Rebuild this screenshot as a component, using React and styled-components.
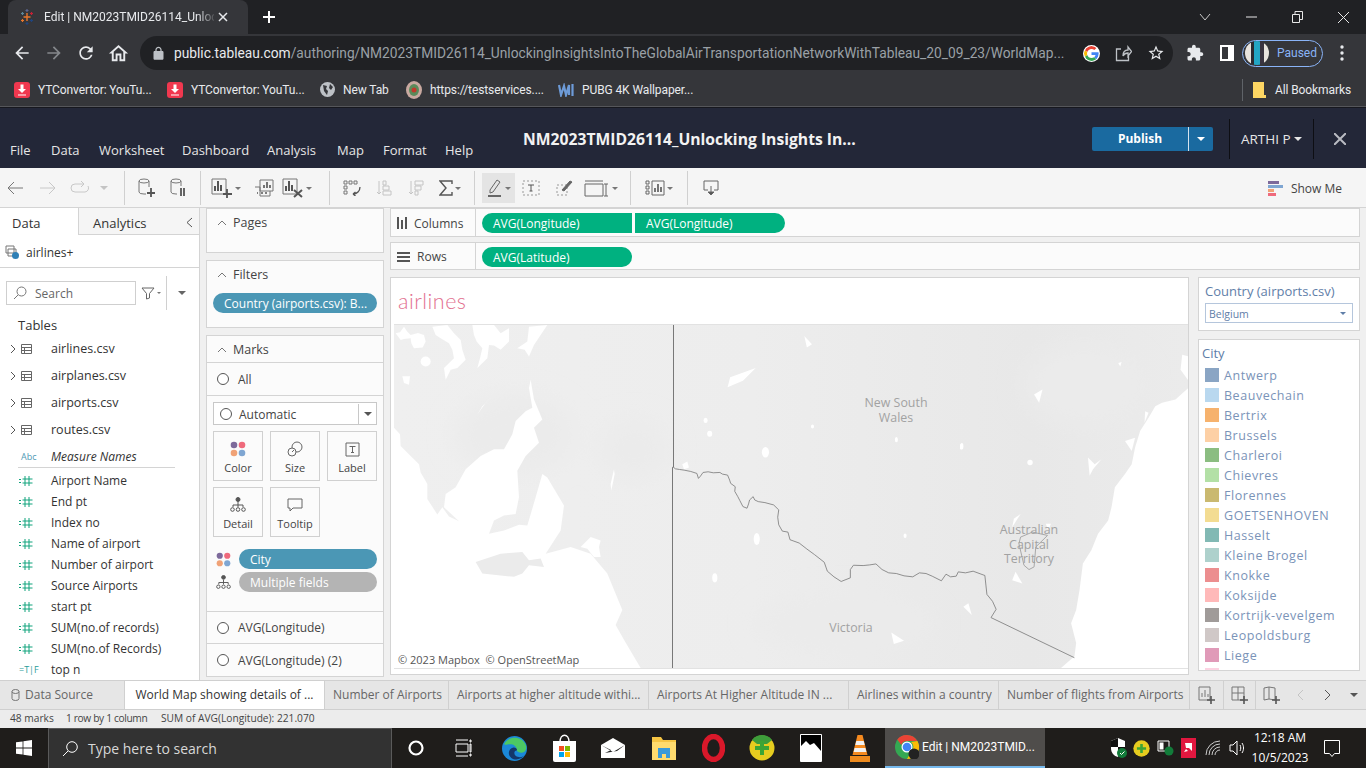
import React from 'react'
import styled, { createGlobalStyle } from 'styled-components'

const GlobalStyle = createGlobalStyle`
    html, body { margin: 0; padding: 0; background: #f0f0f0; }
    * { box-sizing: border-box; }
    svg { display: block; flex-shrink: 0; }
`;

const UI = `"Open Sans", "Noto Sans", sans-serif`;
const CHROME = `Roboto, "Open Sans", sans-serif`;

const Page = styled.div`
    width: 1366px;
    height: 768px;
    overflow: hidden;
    display: flex;
    flex-direction: column;
    font-family: ${UI};
    background: #f0f0f0;
`;

/* ---------- chrome browser ---------- */
const TabStrip = styled.div`
    height: 34px;
    background: #202124;
    display: flex;
    align-items: flex-end;
    padding-left: 8px;
    font-family: ${CHROME};
`;
const BrowserTab = styled.div`
    width: 240px;
    height: 34px;
    background: #35363a;
    border-radius: 8px 8px 0 0;
    display: flex;
    align-items: center;
    padding-left: 11px;
    color: #e8eaed;
    font-size: 12px;
`;
const TabTitle = styled.span`
    width: 170px;
    margin-left: 9px;
    white-space: nowrap;
    -webkit-mask-image: linear-gradient(to right, #000 90%, rgba(0, 0, 0, 0.15));
`;
const TabClose = styled.span`
    margin-left: 4px;
`;
const NewTab = styled.span`
    margin-left: 14px;
    height: 34px;
    display: flex;
    align-items: center;
`;
const WinControls = styled.div`
    margin-left: auto;
    height: 34px;
    display: flex;
    align-items: center;
`;
const WinBtn = styled.span`
    width: 46px;
    height: 28px;
    display: flex;
    align-items: center;
    justify-content: center;
`;

const AddressRow = styled.div`
    height: 39px;
    background: #35363a;
    display: flex;
    align-items: center;
    font-family: ${CHROME};
`;
const NavBtn = styled.span`
    width: ${p => p.$w || 32}px;
    display: flex;
    justify-content: center;
    align-items: center;
`;
const NavGroup = styled.div`
    display: flex;
    width: 140px;
    padding-left: 6px;
`;
const UrlBox = styled.div`
    width: 1033px;
    height: 34px;
    border-radius: 17px;
    background: #202124;
    display: flex;
    align-items: center;
    padding-left: 11px;
    font-size: 13.75px;
    color: #9aa0a6;
    white-space: nowrap;
`;
const UrlText = styled.span`
    width: 896px;
    margin-left: 8px;
    b { font-weight: 400; color: #e8eaed; }
`;
const UrlIcons = styled.div`
    display: flex;
    align-items: center;
    margin-left: 13px;
    gap: 15px;
`;
const ProfilePill = styled.div`
    margin-left: 5px;
    width: 81px;
    height: 27px;
    border: 1px solid #8ab4f8;
    border-radius: 14px;
    display: flex;
    align-items: center;
    padding-left: 2px;
    color: #8ab4f8;
    font-size: 12px;
    gap: 8px;
`;
const Avatar = styled.span`
    width: 24px;
    height: 24px;
    border-radius: 50%;
    background: linear-gradient(90deg, #e8e4de 0 25%, #2c2a30 25% 38%, #23a6c4 38% 62%, #3a3440 62% 78%, #e8e4de 78%);
`;

const BookmarkRow = styled.div`
    height: 35px;
    background: #35363a;
    display: flex;
    align-items: center;
    font-family: ${CHROME};
    font-size: 12px;
    letter-spacing: -0.1px;
    color: #e8eaed;
    border-bottom: 1px solid #55565a;
`;
const Bookmark = styled.div`
    width: ${p => p.$w}px;
    display: flex;
    align-items: center;
    gap: 8px;
    white-space: nowrap;
`;
const BookmarksLeft = styled.div`
    display: flex;
    padding-left: 14px;
    width: 1242px;
`;
const BookmarksRight = styled.div`
    border-left: 1px solid #5f6368;
    height: 22px;
    padding-left: 10px;
    display: flex;
    align-items: center;
    gap: 9px;
`;

/* ---------- tableau header ---------- */
const AppHeader = styled.header`
    height: 61px;
    background: #232738;
    border-top: 1px solid #17181f;
    padding-top: 1px;
    display: flex;
    align-items: center;
    color: #e6e6e6;
`;
const Menu = styled.nav`
    align-self: flex-end;
    display: flex;
    padding: 0 0 8px 10px;
    font-size: 13px;
    line-height: 20px;
    width: 523px;
`;
const MenuItem = styled.span`
    width: ${p => p.$w}px;
`;
const WorkbookTitle = styled.h1`
    margin: 0;
    width: 569px;
    font-size: 15.7px;
    font-weight: 700;
    color: #f2f2f2;
    white-space: nowrap;
`;
const PublishBtn = styled.div`
    width: 121px;
    height: 24px;
    background: #1a6aa0;
    border-radius: 2px;
    display: flex;
    align-items: center;
    color: #fff;
    font-size: 12px;
    font-weight: 700;
`;
const PublishLabel = styled.span`
    width: 96px;
    text-align: center;
`;
const PublishCaret = styled.span`
    flex: 1;
    height: 100%;
    border-left: 1px solid #d5e3ee;
    display: flex;
    align-items: center;
    justify-content: center;
`;
const UserBox = styled.div`
    margin-left: 16px;
    width: 85px;
    height: 40px;
    border-left: 1px solid #0d0e13;
    border-right: 1px solid #0d0e13;
    display: flex;
    align-items: center;
    padding-left: 11px;
    gap: 3px;
    font-size: 13.5px;
    white-space: nowrap;
`;
const CloseBtn = styled.span`
    margin-left: 20px;
`;
const Caret = styled.i`
    display: inline-block;
    width: 0;
    height: 0;
    border-left: ${p => p.$s || 4}px solid transparent;
    border-right: ${p => p.$s || 4}px solid transparent;
    border-top: ${p => p.$s || 4}px solid ${p => p.$c || '#777'};
`;

/* ---------- tableau toolbar ---------- */
const Toolbar = styled.div`
    height: 40px;
    background: #f5f5f5;
    border-bottom: 1px solid #d4d4d4;
    padding-top: 1px;
    display: flex;
    align-items: center;
    flex-shrink: 0;
`;
const Tool = styled.span`
    width: ${p => p.$w}px;
    height: ${p => (p.$on ? 30 : 24)}px;
    display: flex;
    align-items: center;
    justify-content: center;
    gap: 2px;
    background: ${p => (p.$on ? '#e4e4e4' : 'transparent')};
`;
const ToolSep = styled.span`
    width: 1px;
    height: 34px;
    background: #d0d0d0;
    margin-left: ${p => p.$ml}px;
`;
const ShowMe = styled.div`
    margin-left: auto;
    padding: 1px 24px 0 0;
    display: flex;
    align-items: center;
    gap: 8px;
    font-size: 12px;
    color: #444;
`;

/* ---------- work area ---------- */
const Work = styled.main`
    height: 472px;
    display: flex;
    background: #f0f0f0;
    flex-shrink: 0;
`;
const DataPane = styled.aside`
    width: 200px;
    background: #fff;
    border-right: 1px solid #d4d4d4;
    display: flex;
    flex-direction: column;
    overflow: hidden;
    color: #333;
`;
const PaneTabs = styled.div`
    height: 27px;
    display: flex;
    font-size: 13px;
`;
const PaneTab = styled.div`
    width: ${p => p.$w}px;
    display: flex;
    align-items: center;
    padding: 3px 6px 0 ${p => p.$pl}px;
    background: ${p => (p.$on ? '#fff' : '#f5f5f5')};
    border-bottom: ${p => (p.$on ? 'none' : '1px solid #d4d4d4')};
    border-right: ${p => (p.$on ? '1px solid #d4d4d4' : 'none')};
    justify-content: space-between;
`;
const SourceRow = styled.div`
    height: 33px;
    border-bottom: 1px solid #d4d4d4;
    display: flex;
    align-items: center;
    padding: 2px 0 0 5px;
    gap: 6px;
    font-size: 12px;
`;
const SearchRow = styled.div`
    height: 35px;
    margin-top: 13px;
    padding-left: 6px;
    display: flex;
    align-items: flex-start;
`;
const SearchBox = styled.div`
    width: 130px;
    height: 24px;
    border: 1px solid #cfcfcf;
    display: flex;
    align-items: center;
    padding-left: 6px;
    gap: 8px;
    font-size: 12px;
    color: #666;
`;
const SearchTools = styled.div`
    height: 24px;
    display: flex;
    align-items: center;
`;
const SectionLabel = styled.div`
    padding-left: 18px;
    font-size: 13px;
    height: 19px;
    line-height: 18px;
`;
const TableRow = styled.div`
    height: 27px;
    display: flex;
    align-items: center;
    padding-left: 10px;
    font-size: 12.5px;
`;
const TableName = styled.span`
    margin-left: 15px;
`;
const NamesRow = styled.div`
    margin: 2px 24px 2px 18px;
    height: 23px;
    border-bottom: 1px solid #d4d4d4;
    display: flex;
    align-items: center;
    font-size: 12px;
    font-style: italic;
`;
const AbcMark = styled.span`
    width: 33px;
    padding-left: 3px;
    font-size: 9px;
    font-style: normal;
    color: #4f9ab5;
`;
const FieldRow = styled.div`
    height: 21px;
    display: flex;
    align-items: center;
    padding-left: 19px;
    font-size: 12px;
    white-space: nowrap;
`;
const FieldName = styled.span`
    margin-left: 18px;
`;
const BoolMark = styled.span`
    width: 32px;
    font-size: 9px;
    color: #2a9d9a;
`;

const CardsPane = styled.div`
    width: 178px;
    margin-left: 6px;
    display: flex;
    flex-direction: column;
    gap: 7px;
`;
const Card = styled.section`
    height: ${p => p.$h}px;
    background: #fbfbfb;
    border: 1px solid #d4d4d4;
    color: #444;
    font-size: 12px;
`;
const CardHead = styled.div`
    height: 26px;
    display: flex;
    align-items: center;
    padding: 1px 0 0 10px;
    gap: 6px;
    font-size: 12.5px;
`;
const FilterPill = styled.div`
    margin: 6px 6px 0 6px;
    height: 20px;
    border-radius: 10px;
    background: #4b97b5;
    color: #fff;
    padding-left: 11px;
    line-height: 22px;
    font-size: 12px;
    white-space: nowrap;
`;
const MarksRow = styled.div`
    height: ${p => p.$h}px;
    border-top: 1px solid #d4d4d4;
    display: flex;
    align-items: center;
    padding-left: 10px;
    gap: 9px;
    font-size: 12px;
`;
const MarksBody = styled.div`
    border-top: 1px solid #d4d4d4;
`;
const Radio = styled.i`
    width: 12px;
    height: 12px;
    border: 1px solid #555;
    border-radius: 50%;
    flex-shrink: 0;
    background: #fff;
`;
const MarkSelect = styled.div`
    margin: 6px 0 6px 6px;
    width: 164px;
    height: 23px;
    border: 1px solid #c8c8c8;
    background: #fff;
    display: flex;
    align-items: center;
    padding: 1px 0 0 6px;
    gap: 7px;
    font-size: 12px;
`;
const SelectArrow = styled.span`
    margin-left: auto;
    width: 18px;
    height: 100%;
    border-left: 1px solid #c8c8c8;
    display: flex;
    align-items: center;
    justify-content: center;
`;
const MarkGrid = styled.div`
    margin-left: 6px;
    display: grid;
    grid-template-columns: repeat(3, 50px);
    grid-auto-rows: 50px;
    gap: 6px 7px;
`;
const MarkBtn = styled.div`
    border: 1px solid #d0d0d0;
    background: #fbfbfb;
    display: flex;
    flex-direction: column;
    align-items: center;
    justify-content: center;
    gap: 3px;
    font-size: 11px;
    color: #444;
    padding-top: 4px;
`;
const PillList = styled.div`
    margin: 12px 6px 19px 9px;
    display: grid;
    grid-template-columns: 16px 138px;
    grid-auto-rows: 20px;
    column-gap: 7px;
    row-gap: 3px;
    align-items: center;
`;
const Pill = styled.div`
    height: 20px;
    border-radius: 10px;
    background: ${p => p.$bg};
    color: #fff;
    padding-left: 11px;
    line-height: 22px;
    font-size: 12px;
`;

const VizArea = styled.div`
    width: 970px;
    margin-left: 6px;
    display: flex;
    flex-direction: column;
`;
const Shelf = styled.div`
    height: ${p => p.$h}px;
    margin-bottom: ${p => p.$mb}px;
    background: #fbfbfb;
    border: 1px solid #d4d4d4;
    display: flex;
    align-items: center;
    font-size: 12px;
    color: #444;
`;
const ShelfLabel = styled.div`
    width: 85px;
    height: 100%;
    border-right: 1px solid #d4d4d4;
    display: flex;
    align-items: center;
    padding: 1px 0 0 6px;
    gap: 7px;
    margin-right: 6px;
`;
const GreenPill = styled.div`
    width: 150px;
    height: 20px;
    margin: 1px 3px 0 0;
    background: #00b180;
    border-radius: ${p => p.$r};
    color: #fff;
    padding-left: 11px;
    line-height: 21px;
    font-size: 12px;
`;
const VizRow = styled.div`
    display: flex;
    gap: 9px;
`;
const Sheet = styled.section`
    width: 799px;
    height: 398px;
    background: #fff;
    border: 1px solid #d4d4d4;
    padding-left: 3px;
`;
const SheetTitle = styled.h2`
    margin: 0;
    height: 46px;
    padding: 11px 0 0 4px;
    font-size: 21.5px;
    line-height: 25px;
    font-weight: 300;
    font-family: "Lato", ${UI};
    color: #e2708f;
    letter-spacing: 0.5px;
`;
const MapBox = styled.div`
    position: relative;
    width: 794px;
    height: 345px;
    border-top: 1px solid #e2e2e2;
    border-bottom: 1px solid #e2e2e2;
    overflow: hidden;
    svg { width: 100%; height: 100%; }
`;
const MapLabel = styled.div`
    position: absolute;
    left: ${p => p.$x}px;
    top: ${p => p.$y}px;
    transform: translateX(-50%);
    text-align: center;
    font-size: 12.4px;
    line-height: 14.6px;
    color: #a2a2a2;
    white-space: nowrap;
`;
const Attribution = styled.div`
    position: absolute;
    left: 0;
    bottom: 0;
    padding: 0 4px;
    font-size: 11px;
    line-height: 16px;
    color: #555;
    background: rgba(255, 255, 255, 0.5);
`;

const Legends = styled.div`
    width: 162px;
    display: flex;
    flex-direction: column;
    gap: 8px;
`;
const LegendCard = styled.section`
    height: ${p => p.$h}px;
    background: #fff;
    border: 1px solid #d4d4d4;
    overflow: hidden;
    color: #5f7ea8;
`;
const LegendTitle = styled.div`
    font-size: 13px;
    line-height: 18px;
    margin: ${p => p.$m};
`;
const CountrySelect = styled.div`
    margin: 3px 6px 0 6px;
    height: 20px;
    border: 1px solid #b5c6dc;
    display: flex;
    align-items: center;
    justify-content: space-between;
    padding: 1px 6px 0 3px;
    font-size: 10.5px;
`;
const LegendItem = styled.div`
    height: 20px;
    display: flex;
    align-items: center;
    padding-left: 6px;
    gap: 5px;
    font-size: 12.5px;
    white-space: nowrap;
    letter-spacing: 0.55px;
    color: #7a93b8;
`;
const Swatch = styled.i`
    width: 14px;
    height: 14px;
    background: ${p => p.$c};
`;

/* ---------- bottom ---------- */
const SheetTabs = styled.div`
    height: 30px;
    background: #e6e6e6;
    border-top: 1px solid #d0d0d0;
    border-bottom: 1px solid #cfcfcf;
    display: flex;
    font-size: 12px;
    color: #666;
    flex-shrink: 0;
`;
const SheetTab = styled.div`
    width: ${p => p.$w}px;
    display: flex;
    align-items: center;
    justify-content: ${p => (p.$on ? 'center' : 'flex-start')};
    padding: 0 0 1px ${p => (p.$on ? 0 : p.$pl || 8)}px;
    gap: 5px;
    white-space: nowrap;
    overflow: hidden;
    background: ${p => (p.$on ? '#fff' : 'transparent')};
    color: ${p => (p.$on ? '#333' : '#666')};
    border-right: 1px solid #d0d0d0;
`;
const SheetIcon = styled.span`
    width: ${p => p.$w}px;
    display: flex;
    align-items: center;
    justify-content: center;
    border-right: ${p => (p.$line ? '1px solid #d0d0d0' : 'none')};
`;
const StatusBar = styled.div`
    height: 18px;
    background: #ececec;
    display: flex;
    align-items: center;
    padding: 0 0 2px 10px;
    font-size: 10.2px;
    color: #444;
    flex-shrink: 0;
    white-space: nowrap;
`;
const StatusItem = styled.span`
    width: ${p => p.$w}px;
    letter-spacing: ${p => p.$ls || 0}px;
`;

const Taskbar = styled.footer`
    height: 40px;
    background: #1f1d1b;
    display: flex;
    align-items: center;
    color: #fff;
    flex-shrink: 0;
`;
const StartBtn = styled.span`
    width: 48px;
    display: flex;
    justify-content: center;
`;
const TaskSearch = styled.div`
    width: 344px;
    height: 40px;
    background: #323232;
    border: 1px solid #5a5a5a;
    border-bottom: none;
    display: flex;
    align-items: center;
    padding-left: 13px;
    gap: 10px;
    font-size: 14px;
    color: #d8d8d8;
`;
const TaskIcon = styled.span`
    width: ${p => p.$w || 49}px;
    display: flex;
    justify-content: center;
    align-items: center;
`;
const ChromeTask = styled.div`
    width: 160px;
    height: 40px;
    background: #4f4d4b;
    border-bottom: 2px solid #76b9ed;
    display: flex;
    align-items: center;
    padding-left: 10px;
    gap: 3px;
    font-family: ${CHROME};
    font-size: 12px;
    white-space: nowrap;
`;
const Tray = styled.div`
    margin-left: auto;
    padding-right: 11px;
    display: flex;
    align-items: center;
`;
const Clock = styled.div`
    width: 58px;
    margin-left: 3px;
    text-align: center;
    font-size: 12px;
    line-height: 20px;
`;

/* ---------- icons ---------- */
const Mat = ({ d, c = '#e8eaed', s = 20 }) => (
    <svg width={s} height={s} viewBox="0 0 24 24" fill={c}><path d={d} /></svg>
);
const Line = ({ w = 22, h = 22, c = '#777', sw = 1, children }) => (
    <svg width={w} height={h} viewBox={`0 0 ${w} ${h}`} fill="none" stroke={c} strokeWidth={sw}>{children}</svg>
);

const TableauLogo = () => (
    <svg width="16" height="16" viewBox="0 0 16 16" strokeWidth="1.2" fill="none">
        <path d="M8 4v8M4.5 8h7" stroke="#e8762c" strokeWidth="1.4" />
        <path d="M3.5 3v3M2 4.5h3" stroke="#5b879b" />
        <path d="M12.5 3v3M11 4.5h3" stroke="#c72035" />
        <path d="M3.5 10v3M2 11.5h3" stroke="#e8762c" />
        <path d="M12.5 10v3M11 11.5h3" stroke="#1f447e" />
        <path d="M8 0v3M6.5 1.5h3" stroke="#5b6591" />
        <path d="M8 13v3M6.5 14.5h3" stroke="#1f447e" />
    </svg>
);
const GoogleG = () => (
    <svg width="17" height="17" viewBox="0 0 48 48" style={{ background: '#fff', borderRadius: '50%', padding: 1 }}>
        <path fill="#EA4335" d="M24 9.5c3.5 0 6.6 1.2 9.1 3.6l6.8-6.8C35.9 2.4 30.4 0 24 0 14.6 0 6.6 5.4 2.6 13.2l7.9 6.2C12.4 13.7 17.7 9.5 24 9.5z" />
        <path fill="#4285F4" d="M46.9 24.5c0-1.6-.1-3.1-.4-4.5H24v9h12.9c-.6 3-2.2 5.5-4.7 7.2l7.7 6c4.4-4.1 7-10.2 7-17.7z" />
        <path fill="#FBBC05" d="M10.5 28.6c-.5-1.4-.8-3-.8-4.6s.3-3.2.8-4.6l-7.9-6.2C.9 16.5 0 20.1 0 24s.9 7.5 2.6 10.8l7.9-6.2z" />
        <path fill="#34A853" d="M24 48c6.5 0 11.9-2.1 15.9-5.8l-7.7-6c-2.2 1.5-4.9 2.3-8.2 2.3-6.3 0-11.6-4.2-13.5-9.9l-7.9 6.2C6.6 42.6 14.6 48 24 48z" />
    </svg>
);
const RedBook = () => (
    <svg width="16" height="16" viewBox="0 0 16 16">
        <rect width="16" height="16" rx="3" fill="#f0384f" />
        <path d="M6.5 2.5h3V7H12l-4 4-4-4h2.5zM4 12.5h8v1H4z" fill="#fff" />
    </svg>
);
const GlobeGray = () => (
    <svg width="15" height="15" viewBox="0 0 15 15">
        <circle cx="7.5" cy="7.5" r="7.5" fill="#bdc1c6" />
        <path d="M3 3l4 1-1 3 2 2-1 4-3-4zM10 2l3 3-2 3-2-2z" fill="#35363a" />
    </svg>
);
const Seal = () => (
    <svg width="16" height="18" viewBox="0 0 16 18">
        <ellipse cx="8" cy="9" rx="8" ry="9" fill="#c9a9a0" />
        <ellipse cx="8" cy="9" rx="5" ry="6" fill="#5a8a5a" />
        <circle cx="8" cy="9" r="2.5" fill="#c0392b" />
    </svg>
);
const WLogo = () => (
    <svg width="16" height="14" viewBox="0 0 16 14" fill="none" stroke="#6d9bd8" strokeWidth="2.2">
        <path d="M1 2l2 10 3-9 2 9 3-10v10M14.5 1v12" />
    </svg>
);

const Tableau = {
    back: <Line w={18} h={14}><path d="M17 7H2M8 1L2 7l6 6" /></Line>,
    fwd: <Line w={18} h={14} c="#c8c8c8"><path d="M1 7h15M10 1l6 6-6 6" /></Line>,
    redo: <Line w={20} h={14} c="#c8c8c8"><path d="M14 3H5a4 4 0 0 0 0 8h10a4 4 0 0 0 3-6M11 0l3 3-3 3" /></Line>,
    dbAdd: <Line w={18} h={20}><ellipse cx="7" cy="3" rx="5" ry="2" /><path d="M2 3v11a5 2 0 0 0 5 2h2M12 3v6" /><path d="M14 10v9M10 15h8" strokeWidth="1.8" stroke="#555" /></Line>,
    dbPause: <Line w={18} h={20}><ellipse cx="7" cy="3" rx="5" ry="2" /><path d="M2 3v11a5 2 0 0 0 5 2h1M12 3v5" /><path d="M12 10v8M15 10v8" strokeWidth="1.8" stroke="#555" /></Line>,
    sheet: <Line w={22} h={20}><path d="M1 1h14v15H1z" /><path d="M4 13V8M7 13V3M10 13V7" strokeWidth="2" stroke="#555" /><path d="M16 11v9M12 16h9" strokeWidth="1.8" stroke="#555" /></Line>,
    dash: <Line w={20} h={18}><path d="M6 1h13v11H6zM1 8h5v9h10v-5" /><path d="M10 9V6M13 9V3M16 9V6M3 14h1M7 14h2M11 14h2" strokeWidth="1.6" stroke="#555" /></Line>,
    clear: <Line w={22} h={20}><path d="M1 1h14v15H1z" /><path d="M4 13V8M7 13V3M10 13V7" strokeWidth="2" stroke="#555" /><path d="M12 12l8 7M20 12l-8 7" strokeWidth="2" stroke="#555" /></Line>,
    swap: <Line w={18} h={16}><path d="M1 1h3v3H1zM6 1h3v3H6zM11 1h3v3h-3zM1 6h3v3H1zM1 11h3v3H1z" /><path d="M17 7c0 4-3 7-7 7M10 14l2.5-2M10 14l2.5 2" strokeWidth="1.3" stroke="#555" /></Line>,
    sortA: <Line w={16} h={16} c="#c4c4c4"><path d="M3 1v13M1 12l2 2 2-2M7 1h3v4H7zM7 6h6v4H7zM7 11h8v4H7z" /></Line>,
    sortD: <Line w={16} h={16} c="#c4c4c4"><path d="M3 1v13M1 12l2 2 2-2M7 1h8v4H7zM7 6h6v4H7zM7 11h3v4H7z" /></Line>,
    sigma: <Line w={14} h={16} c="#555" sw={1.4}><path d="M13 4V1H1l6 7-6 7h12v-3" /></Line>,
    pen: <Line w={16} h={18} c="#666"><path d="M3 11L10 1l3 2-7 10-3 1z" /><path d="M1 17h13" strokeWidth="2" /></Line>,
    text: <Line w={18} h={16} c="#999"><path d="M1 1h16v14H1z" strokeDasharray="2 2" /><path d="M6 5h6M9 5v6M7.5 11h3" stroke="#555" /></Line>,
    note: <Line w={17} h={16} c="#999"><path d="M1 5h10v10H1z" strokeDasharray="2 2" /><path d="M6 10l8-9 2 1-8 9z" fill="#666" stroke="#666" /></Line>,
    fit: <Line w={26} h={17} c="#666"><path d="M1 4h18v12H1zM1 1h18M22 4v12M20 4h4M20 16h4" /></Line>,
    show: <Line w={20} h={16} c="#666"><path d="M1 1h3v3H1zM1 6h3v3H1zM1 11h3v3H1zM7 1h12v14H7z" /><path d="M10 12V8M13 12V4M16 12V7" strokeWidth="1.6" stroke="#555" /></Line>,
    down: <Line w={16} h={16} c="#666"><path d="M5 10H1V1h14v9h-4M8 6v9" /><path d="M5 12l3 3 3-3z" fill="#555" /></Line>,
    funnel: <Line w={14} h={14} c="#666"><path d="M1 2h12L8.5 7.5V12l-3 1V7.5z" /></Line>,
    lens: <Line w={14} h={14} c="#777"><circle cx="8.5" cy="5.5" r="4.5" /><path d="M5 9l-4 4" /></Line>,
    table: <Line w={11} h={10} c="#666"><path d="M.5.5h10v9H.5zM.5 3.5h10M.5 6.5h10M3.5 3.5v6" /></Line>,
    chevR: <Line w={6} h={10} c="#555"><path d="M1 1l4 4-4 4" /></Line>,
    up: <Line w={10} h={6} c="#777"><path d="M1 5l4-4 4 4" /></Line>,
};

const MeasureIcon = () => (
    <svg width="14" height="10" viewBox="0 0 14 10" fill="none" stroke="#11a37c">
        <path d="M0 3.5h2M0 6.5h2M6 0v10M10 0v10M3.5 3h10M3.5 7h10" />
    </svg>
);
const ColorDots = ({ s = 16 }) => (
    <svg width={s} height={s} viewBox="0 0 16 16">
        <circle cx="4" cy="4" r="3.3" fill="#7d6a9b" />
        <circle cx="12" cy="4" r="3.3" fill="#ef6a7c" />
        <circle cx="4" cy="12" r="3.3" fill="#f0a277" />
        <circle cx="12" cy="12" r="3.3" fill="#7fa6d2" />
    </svg>
);
const DetailDots = ({ s = 16 }) => (
    <svg width={s} height={s} viewBox="0 0 16 16" fill="none" stroke="#555">
        <circle cx="8" cy="2.5" r="2" fill="#555" />
        <path d="M8 5v3M3 10V8h10v2M8 8v2" />
        <circle cx="2.5" cy="12.5" r="1.8" />
        <circle cx="8" cy="12.5" r="1.8" />
        <circle cx="13.5" cy="12.5" r="1.8" />
    </svg>
);

const CITIES = [
    ['Antwerp', '#8aa5c4'], ['Beauvechain', '#b9d8ef'], ['Bertrix', '#f6b26d'], ['Brussels', '#fdd0a5'],
    ['Charleroi', '#8bbd81'], ['Chievres', '#b3e0a6'], ['Florennes', '#cab970'], ['GOETSENHOVEN', '#f3dc92'],
    ['Hasselt', '#82b9b4'], ['Kleine Brogel', '#aed1cc'], ['Knokke', '#ec8e8f'], ['Koksijde', '#ffb9b9'],
    ['Kortrijk-vevelgem', '#a09b99'], ['Leopoldsburg', '#d0c8c7'], ['Liege', '#e09ab8'], ['', '#fcd3e2'],
];
const MEASURES = ['Airport Name', 'End pt', 'Index no', 'Name of airport', 'Number of airport', 'Source Airports', 'start pt', 'SUM(no.of records)', 'SUM(no.of Records)'];
const SHEETS = [
    ['Number of Airports', 124], ['Airports at higher altitude withi...', 200], ['Airports At Higher Altitude IN ...', 200],
    ['Airlines within a country', 150], ['Number of flights from Airports', 191],
];

const BORDER = 'M553 560L558 566 566 568 575 570 588 574 600 580 603 595 607 588 612 577 622 575 632 578 645 577 650 582 660 585 664 600 666 610 675 620 674 634 680 650 684 662 690 680 698 685 701 672 703 660 710 650 713 660 720 665 733 668 750 675 760 690 758 712 760 735 767 754 778 757 782 780 800 790 815 808 830 825 849 848 855 875 868 892 882 906 900 895 900 870 906 857 925 858 938 856 950 853 962 870 975 880 990 882 1005 889 1022 892 1035 880 1048 882 1060 890 1078 904 1087 884 1096 892 1107 890 1111 877 1125 880 1140 875 1163 888 1167 945 1178 966 1185 990 1175 1015 1338 1136';

const WorldMap = () => (
    <MapBox>
        <svg viewBox="0 0 794 345" preserveAspectRatio="none">
            <defs>
                <linearGradient id="land" x1="0" x2="1" y1="0" y2="0">
                    <stop offset="0" stopColor="#efefef" />
                    <stop offset="0.45" stopColor="#ededed" />
                    <stop offset="0.8" stopColor="#e8e8e8" />
                    <stop offset="1" stopColor="#ebebeb" />
                </linearGradient>
                <filter id="soft"><feGaussianBlur stdDeviation="12" /></filter>
                <filter id="coast"><feGaussianBlur stdDeviation="1.6" /></filter>
            </defs>
            <rect width="794" height="345" fill="url(#land)" />
            <g filter="url(#soft)" fill="#ebebeb">
                <ellipse cx="120" cy="110" rx="60" ry="40" />
                <ellipse cx="240" cy="125" rx="35" ry="30" />
                <ellipse cx="450" cy="300" rx="90" ry="30" />
                <ellipse cx="690" cy="60" rx="60" ry="40" />
            </g>
            {/* south australian coast, gulfs and the lakes above them */}
            <g transform="scale(0.3333)" fill="#fff" filter="url(#coast)">
                <path d="M0 310L18 330 20 365 50 395 75 420 80 445 100 480 100 525 130 572 145 550 165 578 195 592 150 550 155 510 185 490 215 435 260 395 300 375 330 375 355 330 365 290 395 260 415 250 405 190 410 165 420 225 445 285 420 310 435 355 395 395 370 440 375 520 365 570 330 575 300 590 285 630 330 620 375 603 400 605 425 520 445 450 460 460 510 545 500 620 455 690 530 670 590 690 640 750 685 860 665 905 690 950 740 1035H0z" />
                <path fill="#ebebeb" d="M245 715L320 690 385 685 405 710 440 705 450 730 405 725 385 750 360 760 265 750z" />
                <path d="M5 25L18 22 30 5 40 20 50 30 72 24 90 30 95 50 86 68 60 70 52 55 50 40 30 42 20 45z" />
                <path d="M115 5L160 0 180 25 200 45 205 75 215 105 190 130 170 135 155 165 150 130 180 100 175 75 165 55 140 40 125 30z" />
                <path d="M235 0H300L320 25 345 10 345 50 320 75 300 62 285 60 280 100 250 130 258 100 265 70 248 50 240 30z" />
                <path d="M370 70L400 50 405 5 460 0 440 30 420 60 405 95 392 75z" />
                <circle cx="95" cy="110" r="15" />
                <path d="M25 155L48 155 45 180 30 175z" />
                <path d="M295 215L265 245 250 270 275 235z" />
                <path d="M560 670L590 640 620 650 615 670 620 700 600 700 580 675z" />
                <path d="M660 435L662 450 652 500 650 480z" />
                <path d="M865 420L880 412 885 430 870 435z" />
            </g>
            {/* east coast and the lakes near canberra */}
            <g transform="translate(566 0) scale(0.3367 0.3333)" fill="#fff" filter="url(#coast)">
                <path d="M684 185L640 225 600 235 580 245 560 280 535 320 520 370 510 420 490 450 460 490 450 550 440 590 410 630 390 680 365 720 355 800 345 860 330 900 345 960 340 1000 300 1035H684z" />
                <path d="M220 210L245 195 235 235z" />
                <circle cx="208" cy="415" r="8" />
                <path d="M380 400L400 420 420 405 395 435 385 455z" />
                <path d="M155 770L165 745 185 780z" />
                <path d="M10 850L25 840 35 875z" />
                <path d="M160 585L180 570 155 610z" />
                <path d="M255 600L270 600 262 620z" />
                <path d="M660 90L680 95 680 170 655 135z" />
                <path d="M470 115L480 112 476 125z" />
                <path d="M490 350L520 340 510 380z" />
                <path d="M0 360H6V375H0z" />
                <path d="M550 260L560 265 548 295z" />
            </g>
            {/* lakes and state border, traced against the stretched crop */}
            <g transform="translate(-4 -44) scale(0.5115 0.3333)">
                <g fill="#fff">
                    <path d="M660 320L665 290 715 262 690 300z" />
                    <ellipse cx="734" cy="516" rx="7" ry="16" />
                    <ellipse cx="717" cy="778" rx="6" ry="18" />
                    <path d="M810 165L825 190 815 200z" />
                    <ellipse cx="635" cy="895" rx="5" ry="14" />
                    <ellipse cx="990" cy="478" rx="3" ry="8" />
                    <ellipse cx="826" cy="438" rx="3" ry="6" />
                    <ellipse cx="617" cy="420" rx="4" ry="8" />
                    <ellipse cx="625" cy="460" rx="5" ry="9" />
                    <ellipse cx="1118" cy="498" rx="3" ry="10" />
                    <ellipse cx="1007" cy="768" rx="3" ry="7" />
                    <path d="M980 1060L1005 1085 985 1095z" />
                </g>
                <path d={BORDER} fill="none" stroke="#777" strokeWidth="0.8" vectorEffect="non-scaling-stroke" />
            </g>
            <path d="M279.5 0V143M278.5 143V345" fill="none" stroke="#777" strokeWidth="1" />
            <g transform="translate(566 0) scale(0.3367 0.3333)">
                <path d="M180 640L215 625 260 635 225 670 220 730 205 738 190 725 175 660z" fill="none" stroke="#a8a8a8" strokeWidth="1" vectorEffect="non-scaling-stroke" />
            </g>
        </svg>
        <MapLabel $x={502} $y={71}>New South<br />Wales</MapLabel>
        <MapLabel $x={457} $y={296}>Victoria</MapLabel>
        <MapLabel $x={635} $y={198}>Australian<br />Capital<br />Territory</MapLabel>
        <Attribution>© 2023 Mapbox&nbsp; © OpenStreetMap</Attribution>
    </MapBox>
);

export default function App() {
    return (
        <Page>
            <GlobalStyle />
            <TabStrip>
                <BrowserTab>
                    <TableauLogo />
                    <TabTitle>Edit | NM2023TMID26114_Unloc</TabTitle>
                    <TabClose><Line w={10} h={10} c="#e8eaed" sw={1.5}><path d="M1 1l8 8M9 1l-8 8" /></Line></TabClose>
                </BrowserTab>
                <NewTab><Line w={14} h={14} c="#fff" sw={2}><path d="M7 1v12M1 7h12" /></Line></NewTab>
                <WinControls>
                    <WinBtn><Line w={12} h={8} c="#c8c8c8"><path d="M1 1l5 6 5-6" /></Line></WinBtn>
                    <WinBtn><Line w={11} h={2} c="#e8e8e8"><path d="M0 1h11" /></Line></WinBtn>
                    <WinBtn><Line w={11} h={12} c="#e8e8e8"><path d="M.5 3.5h7v8h-7zM3 3.5V.5h7.5v8h-3" /></Line></WinBtn>
                    <WinBtn><Line w={11} h={11} c="#e8e8e8"><path d="M0 0l11 11M11 0L0 11" /></Line></WinBtn>
                </WinControls>
            </TabStrip>

            <AddressRow>
                <NavGroup>
                    <NavBtn><Mat d="M20 11H7.83l5.59-5.59L12 4l-8 8 8 8 1.41-1.41L7.83 13H20v-2z" /></NavBtn>
                    <NavBtn><Mat c="#85888c" d="M4 11h12.17l-5.59-5.59L12 4l8 8-8 8-1.41-1.41L16.17 13H4v-2z" /></NavBtn>
                    <NavBtn><Mat d="M17.65 6.35A7.958 7.958 0 0 0 12 4c-4.42 0-7.99 3.58-7.99 8s3.57 8 7.99 8c3.73 0 6.84-2.55 7.73-6h-2.08A5.99 5.99 0 0 1 12 18c-3.31 0-6-2.69-6-6s2.69-6 6-6c1.66 0 3.14.69 4.22 1.78L13 11h7V4l-2.35 2.35z" /></NavBtn>
                    <NavBtn><Mat s={23} d="M12 5.69l5 4.5V18h-2v-6H9v6H7v-7.81l5-4.5M12 3L2 12h3v8h6v-6h2v6h6v-8h3L12 3z" /></NavBtn>
                </NavGroup>
                <UrlBox>
                    <Mat s={15} c="#bdc1c6" d="M18 8h-1V6c0-2.76-2.24-5-5-5S7 3.24 7 6v2H6c-1.1 0-2 .9-2 2v10c0 1.1.9 2 2 2h12c1.1 0 2-.9 2-2V10c0-1.1-.9-2-2-2zM9 6c0-1.66 1.34-3 3-3s3 1.34 3 3v2H9V6z" />
                    <UrlText><b>public.tableau.com</b>/authoring/NM2023TMID26114_UnlockingInsightsIntoTheGlobalAirTransportationNetworkWithTableau_20_09_23/WorldMap...</UrlText>
                    <UrlIcons>
                        <GoogleG />
                        <Line w={17} h={17} c="#bdc1c6" sw={1.3}><path d="M6 4H1.5v11.5h12V11M8 11c0-4 2-6 5-6V2l3.5 4.5L13 11V8c-2 0-4 1-5 3z" /></Line>
                        <Mat s={18} c="#e8eaed" d="M22 9.24l-7.19-.62L12 2 9.19 8.63 2 9.24l5.46 4.73L5.82 21 12 17.27 18.18 21l-1.63-7.03L22 9.24zM12 15.4l-3.76 2.27 1-4.28-3.32-2.88 4.38-.38L12 6.1l1.71 4.04 4.38.38-3.32 2.88 1 4.28L12 15.4z" />
                    </UrlIcons>
                </UrlBox>
                <NavBtn $w={44}><Mat s={18} d="M20.5 11H19V7c0-1.1-.9-2-2-2h-4V3.5C13 2.12 11.88 1 10.5 1S8 2.12 8 3.5V5H4c-1.1 0-1.99.9-1.99 2v3.8H3.5c1.49 0 2.7 1.21 2.7 2.7s-1.21 2.7-2.7 2.7H2V20c0 1.1.9 2 2 2h3.8v-1.5c0-1.49 1.21-2.7 2.7-2.7 1.49 0 2.7 1.21 2.7 2.7V22H17c1.1 0 2-.9 2-2v-4h1.5c1.38 0 2.5-1.12 2.5-2.5S21.88 11 20.5 11z" /></NavBtn>
                <NavBtn $w={20}><svg width="14" height="16" viewBox="0 0 14 16"><path d="M0 0h14v16H0z" fill="#fff" /><path d="M2 2h6v12H2z" fill="#35363a" /></svg></NavBtn>
                <ProfilePill><Avatar />Paused</ProfilePill>
                <NavBtn $w={38}><svg width="4" height="16" viewBox="0 0 4 16" fill="#e8eaed"><circle cx="2" cy="2" r="1.7" /><circle cx="2" cy="8" r="1.7" /><circle cx="2" cy="14" r="1.7" /></svg></NavBtn>
            </AddressRow>

            <BookmarkRow>
                <BookmarksLeft>
                    <Bookmark $w={153}><RedBook />YTConvertor: YouTu...</Bookmark>
                    <Bookmark $w={153}><RedBook />YTConvertor: YouTu...</Bookmark>
                    <Bookmark $w={86}><GlobeGray />New Tab</Bookmark>
                    <Bookmark $w={152}><Seal />https://testservices....</Bookmark>
                    <Bookmark $w={140}><WLogo />PUBG 4K Wallpaper...</Bookmark>
                </BookmarksLeft>
                <BookmarksRight>
                    <svg width="13" height="16" viewBox="0 0 13 16"><path d="M0 0h11v13h2v3H0z" fill="#fdd663" /></svg>
                    All Bookmarks
                </BookmarksRight>
            </BookmarkRow>

            <AppHeader>
                <Menu>
                    <MenuItem $w={41}>File</MenuItem>
                    <MenuItem $w={48}>Data</MenuItem>
                    <MenuItem $w={83}>Worksheet</MenuItem>
                    <MenuItem $w={85}>Dashboard</MenuItem>
                    <MenuItem $w={70}>Analysis</MenuItem>
                    <MenuItem $w={46}>Map</MenuItem>
                    <MenuItem $w={62}>Format</MenuItem>
                    <MenuItem $w={40}>Help</MenuItem>
                </Menu>
                <WorkbookTitle>NM2023TMID26114_Unlocking Insights In...</WorkbookTitle>
                <PublishBtn>
                    <PublishLabel>Publish</PublishLabel>
                    <PublishCaret><Caret $c="#fff" /></PublishCaret>
                </PublishBtn>
                <UserBox>ARTHI P<Caret $c="#e6e6e6" /></UserBox>
                <CloseBtn><Line w={12} h={12} c="#b9bbc2" sw={2}><path d="M0 0l12 12M12 0L0 12" /></Line></CloseBtn>
            </AppHeader>

            <Toolbar>
                <Tool $w={30}>{Tableau.back}</Tool>
                <Tool $w={36}>{Tableau.fwd}</Tool>
                <Tool $w={28}>{Tableau.redo}</Tool>
                <Tool $w={20}><Caret $c="#c4c4c4" /></Tool>
                <ToolSep $ml={10} />
                <Tool $w={42}>{Tableau.dbAdd}</Tool>
                <Tool $w={22}>{Tableau.dbPause}</Tool>
                <ToolSep $ml={11} />
                <Tool $w={50}>{Tableau.sheet}<Caret $s={3} /></Tool>
                <Tool $w={26}>{Tableau.dash}</Tool>
                <Tool $w={40}>{Tableau.clear}<Caret $s={3} /></Tool>
                <ToolSep $ml={12} />
                <Tool $w={44}>{Tableau.swap}</Tool>
                <Tool $w={20}>{Tableau.sortA}</Tool>
                <Tool $w={44}>{Tableau.sortD}</Tool>
                <Tool $w={24}>{Tableau.sigma}<Caret $s={3} /></Tool>
                <ToolSep $ml={12} />
                <Tool $w={7} />
                <Tool $w={33} $on>{Tableau.pen}<Caret $s={3} /></Tool>
                <Tool $w={32}>{Tableau.text}</Tool>
                <Tool $w={34}>{Tableau.note}</Tool>
                <Tool $w={40}>{Tableau.fit}<Caret $s={3} /></Tool>
                <ToolSep $ml={9} />
                <Tool $w={56}>{Tableau.show}<Caret $s={3} /></Tool>
                <ToolSep $ml={0} />
                <Tool $w={46}>{Tableau.down}</Tool>
                <ShowMe>
                    <svg width="15" height="15" viewBox="0 0 15 15">
                        <rect width="11" height="3" fill="#7d6a9b" />
                        <rect y="4" width="15" height="3" fill="#7fa6d2" />
                        <rect y="8" width="6" height="3" fill="#f0a277" />
                        <rect y="12" width="8" height="3" fill="#ef6a7c" />
                    </svg>
                    Show Me
                </ShowMe>
            </Toolbar>

            <Work>
                <DataPane>
                    <PaneTabs>
                        <PaneTab $on $w={79} $pl={12}>Data</PaneTab>
                        <PaneTab $w={120} $pl={14}>Analytics<Line w={7} h={11} c="#555"><path d="M6 1L1 5.5 6 10" /></Line></PaneTab>
                    </PaneTabs>
                    <SourceRow>
                        <svg width="15" height="15" viewBox="0 0 15 15" fill="none" stroke="#777">
                            <path d="M1 1h8v7H1zM3 4h8v7H3z" />
                            <circle cx="10.5" cy="10.5" r="3.5" fill="#2f7fb5" stroke="none" />
                        </svg>
                        airlines+
                    </SourceRow>
                    <SearchRow>
                        <SearchBox>{Tableau.lens}Search</SearchBox>
                        <SearchTools>
                            <Tool $w={30}>{Tableau.funnel}<Caret $s={2} /></Tool>
                            <ToolSep $ml={0} />
                            <Tool $w={30}><Caret $c="#666" /></Tool>
                        </SearchTools>
                    </SearchRow>
                    <SectionLabel>Tables</SectionLabel>
                    {['airlines.csv', 'airplanes.csv', 'airports.csv', 'routes.csv'].map(t => (
                        <TableRow key={t}>
                            {Tableau.chevR}
                            <Tool $w={20}>{Tableau.table}</Tool>
                            <TableName>{t}</TableName>
                        </TableRow>
                    ))}
                    <NamesRow><AbcMark>Abc</AbcMark>Measure Names</NamesRow>
                    {MEASURES.map(m => (
                        <FieldRow key={m}><MeasureIcon /><FieldName>{m}</FieldName></FieldRow>
                    ))}
                    <FieldRow><BoolMark>=T|F</BoolMark>top n</FieldRow>
                </DataPane>

                <CardsPane>
                    <Card $h={45}>
                        <CardHead>{Tableau.up}Pages</CardHead>
                    </Card>
                    <Card $h={68}>
                        <CardHead>{Tableau.up}Filters</CardHead>
                        <FilterPill>Country (airports.csv): B...</FilterPill>
                    </Card>
                    <Card $h={342}>
                        <CardHead>{Tableau.up}Marks</CardHead>
                        <MarksRow $h={33}><Radio />All</MarksRow>
                        <MarksBody>
                            <MarkSelect><Radio />Automatic<SelectArrow><Caret $c="#555" /></SelectArrow></MarkSelect>
                            <MarkGrid>
                                <MarkBtn><ColorDots />Color</MarkBtn>
                                <MarkBtn>
                                    <Line w={16} h={16} c="#666"><circle cx="10" cy="6" r="5" /><circle cx="5" cy="11" r="4" fill="#fbfbfb" /><path d="M5 11l2-2" /></Line>
                                    Size
                                </MarkBtn>
                                <MarkBtn>
                                    <Line w={15} h={15} c="#666"><path d="M1 1h13v13H1z" /><path d="M4.5 4.5h6M7.5 4.5v6M6 10.5h3" /></Line>
                                    Label
                                </MarkBtn>
                                <MarkBtn><DetailDots />Detail</MarkBtn>
                                <MarkBtn>
                                    <Line w={16} h={15} c="#666"><path d="M1 1h14v9H6l-3 3v-3H1z" /></Line>
                                    Tooltip
                                </MarkBtn>
                            </MarkGrid>
                            <PillList>
                                <ColorDots s={15} /><Pill $bg="#4b97b5">City</Pill>
                                <DetailDots s={15} /><Pill $bg="#b4b4b4">Multiple fields</Pill>
                            </PillList>
                        </MarksBody>
                        <MarksRow $h={32}><Radio />AVG(Longitude)</MarksRow>
                        <MarksRow $h={33}><Radio />AVG(Longitude) (2)</MarksRow>
                    </Card>
                </CardsPane>

                <VizArea>
                    <Shelf $h={29} $mb={5}>
                        <ShelfLabel>
                            <Line w={10} h={12} c="#555" sw={2}><path d="M1 0v12M5 3v9M9 0v12" /></Line>
                            Columns
                        </ShelfLabel>
                        <GreenPill $r="10px 0 0 10px">AVG(Longitude)</GreenPill>
                        <GreenPill $r="0 10px 10px 0">AVG(Longitude)</GreenPill>
                    </Shelf>
                    <Shelf $h={28} $mb={7}>
                        <ShelfLabel>
                            <Line w={13} h={10} c="#555" sw={2}><path d="M0 1h13M0 5h13M0 9h13" /></Line>
                            Rows
                        </ShelfLabel>
                        <GreenPill $r="10px">AVG(Latitude)</GreenPill>
                    </Shelf>
                    <VizRow>
                        <Sheet>
                            <SheetTitle>airlines</SheetTitle>
                            <WorldMap />
                        </Sheet>
                        <Legends>
                            <LegendCard $h={54}>
                                <LegendTitle $m="4px 0 0 6px">Country (airports.csv)</LegendTitle>
                                <CountrySelect>Belgium<Caret $s={3} $c="#5f7ea8" /></CountrySelect>
                            </LegendCard>
                            <LegendCard $h={332}>
                                <LegendTitle $m="4px 0 3px 3px">City</LegendTitle>
                                {CITIES.map(([name, c]) => (
                                    <LegendItem key={c}><Swatch $c={c} />{name}</LegendItem>
                                ))}
                            </LegendCard>
                        </Legends>
                    </VizRow>
                </VizArea>
            </Work>

            <SheetTabs>
                <SheetTab $w={125} $pl={11}>
                    <Line w={9} h={12} c="#777"><ellipse cx="4.5" cy="2.5" rx="3.5" ry="2" /><path d="M1 2.5v7a3.5 2 0 0 0 7 0v-7" /></Line>
                    Data Source
                </SheetTab>
                <SheetTab $on $w={200}>World Map showing details of ...</SheetTab>
                {SHEETS.map(([name, w]) => <SheetTab key={name} $w={w}>{name}</SheetTab>)}
                <SheetIcon $w={34} $line><Line w={18} h={18} c="#777"><path d="M1 1h11v13H1z" /><path d="M4 11V7M7 11V4M10 11V8" /><path d="M13 10v8M9 14h8" strokeWidth="1.6" stroke="#555" /></Line></SheetIcon>
                <SheetIcon $w={32} $line><Line w={18} h={18} c="#777"><path d="M1 1h12v13H1zM7 1v13M1 7h12" /><path d="M13 10v8M9 14h8" strokeWidth="1.6" stroke="#555" /></Line></SheetIcon>
                <SheetIcon $w={32}><Line w={18} h={18} c="#777"><path d="M1 2l5-1 6 1v12l-6-1-5 1zM6 1v12" /><path d="M13 10v8M9 14h8" strokeWidth="1.6" stroke="#555" /></Line></SheetIcon>
                <SheetIcon $w={24}><Line w={7} h={12} c="#c4c4c4"><path d="M6 1L1 6l5 5" /></Line></SheetIcon>
                <SheetIcon $w={30}><Line w={7} h={12} c="#555"><path d="M1 1l5 5-5 5" /></Line></SheetIcon>
                <SheetIcon $w={24}><Caret $c="#555" /></SheetIcon>
            </SheetTabs>
            <StatusBar>
                <StatusItem $w={56}>48 marks</StatusItem>
                <StatusItem $w={95} $ls={-0.35}>1 row by 1 column</StatusItem>
                <span>SUM of AVG(Longitude): 221.070</span>
            </StatusBar>

            <Taskbar>
                <StartBtn>
                    <svg width="16" height="16" viewBox="0 0 16 16" fill="#fff"><path d="M0 2.3L6.6 1.4V7.6H0zM7.4 1.3L16 0V7.6H7.4zM0 8.4H6.6V14.6L0 13.7zM7.4 8.4H16V16L7.4 14.7z" /></svg>
                </StartBtn>
                <TaskSearch>
                    <Line w={16} h={16} c="#fff"><circle cx="10" cy="6" r="5.3" /><path d="M6 10l-5 5" /></Line>
                    Type here to search
                </TaskSearch>
                <TaskIcon $w={48}><svg width="16" height="16" viewBox="0 0 16 16" fill="none" stroke="#fff" strokeWidth="2.2"><circle cx="8" cy="8" r="6.5" /></svg></TaskIcon>
                <TaskIcon $w={46}><Line w={17} h={18} c="#fff"><path d="M1 5h12v8H1zM1 1h12M1 17h12M15 1h1v2h-1zM15 5h1v8h-1zM15 15h1v2h-1z" /></Line></TaskIcon>
                <TaskIcon $w={56}>
                    <svg width="25" height="25" viewBox="0 0 24 24">
                        <circle cx="12" cy="12" r="12" fill="#1b88d8" />
                        <path d="M2 8C5 0 19-1 23 9c1 4-1 7-4 7-3 0-5-1-5-3 0-3-3-5-6-5-3 0-5 1-6 0z" fill="#4cc864" />
                        <path d="M9 21c-4-3-3-9 2-10 3 0 4 2 3 3-3 0-3 5 1 6 3 1 5 0 6-1-2 3-8 5-12 2z" fill="#14376b" />
                    </svg>
                </TaskIcon>
                <TaskIcon $w={44}>
                    <svg width="23" height="28" viewBox="0 0 23 28">
                        <path d="M7 8c0-9 9-9 9 0" fill="none" stroke="#fff" strokeWidth="1.5" />
                        <path d="M0 7h23v19a2 2 0 0 1-2 2H2a2 2 0 0 1-2-2z" fill="#fff" />
                        <rect x="6" y="12" width="5" height="5" fill="#f25022" /><rect x="12" y="12" width="5" height="5" fill="#7fba00" />
                        <rect x="6" y="18" width="5" height="5" fill="#00a4ef" /><rect x="12" y="18" width="5" height="5" fill="#ffb900" />
                    </svg>
                </TaskIcon>
                <TaskIcon $w={54}>
                    <svg width="24" height="20" viewBox="0 0 24 20">
                        <path d="M0 7L12 0l12 7v13H0z" fill="#fff" />
                        <path d="M0 7l12 7 12-7-8 6-12 2 6-3z" fill="#222" />
                    </svg>
                </TaskIcon>
                <TaskIcon $w={48}>
                    <svg width="24" height="24" viewBox="0 0 24 24">
                        <path d="M0 1h9l2 3h13v20H0z" fill="#f6c544" />
                        <path d="M0 6h24v18H0z" fill="#ffdb6e" />
                        <path d="M6 12h12v10H6z" fill="#3a9ad9" />
                        <path d="M10 18h4v6h-4z" fill="#ffdb6e" />
                    </svg>
                </TaskIcon>
                <TaskIcon $w={50}>
                    <svg width="23" height="28" viewBox="0 0 23 28"><ellipse cx="11.5" cy="14" rx="9" ry="11.5" fill="none" stroke="#d9182a" strokeWidth="5.5" /></svg>
                </TaskIcon>
                <TaskIcon $w={48}>
                    <svg width="26" height="26" viewBox="0 0 26 26">
                        <circle cx="13" cy="13" r="12.5" fill="#e6cc1f" />
                        <path d="M3 5a12.5 12.5 0 0 1 20 0L18 9H8z" fill="#3d9d3a" />
                        <path d="M11 6h4v5h5v4h-5v5h-4v-5H6v-4h5z" fill="#3ba535" />
                    </svg>
                </TaskIcon>
                <TaskIcon $w={49}>
                    <svg width="22" height="28" viewBox="0 0 22 28">
                        <path d="M.5.5h21v27H.5z" fill="#000" stroke="#fff" />
                        <path d="M1 27V12l5-5 4 4 4-2 7 8v10z" fill="#fff" />
                    </svg>
                </TaskIcon>
                <TaskIcon $w={50}>
                    <svg width="20" height="28" viewBox="0 0 20 28">
                        <path d="M7.5 1h5l5 20h-15z" fill="#f58a1f" />
                        <path d="M6.3 7h7.4l1 4H5.3zM4.6 14h10.8l1 4H3.6z" fill="#f2f2f2" />
                        <path d="M0 22h20v6H0z" fill="#ee8a1d" />
                    </svg>
                </TaskIcon>
                <ChromeTask>
                    <svg width="24" height="24" viewBox="0 0 24 24">
                        <circle cx="12" cy="12" r="12" fill="#34a853" />
                        <path d="M12 0a12 12 0 0 1 10.4 6H12a6 6 0 0 0-5.7 4L2.3 4.5A12 12 0 0 1 12 0z" fill="#ea4335" />
                        <path d="M22.4 6A12 12 0 0 1 12 24l5-8.5A6 6 0 0 0 16 7z" fill="#fbbc05" />
                        <circle cx="12" cy="12" r="5.5" fill="#fff" />
                        <circle cx="12" cy="12" r="4.3" fill="#4285f4" />
                        <circle cx="19" cy="19" r="5.5" fill="#222" />
                    </svg>
                    Edit | NM2023TMID...
                </ChromeTask>
                <Tray>
                    <TaskIcon $w={24}>
                        <svg width="17" height="20" viewBox="0 0 17 20"><path d="M8 0l7 3v7c0 5-3 8-7 9-4-1-7-4-7-9V3z" fill="#fff" /><path d="M8 0v9H1V3zM8 9h7v1c0 4-3 8-7 9z" fill="#111" /><circle cx="12" cy="15" r="5" fill="#127c3a" /><path d="M10 15l1.5 1.5 3-3" stroke="#fff" fill="none" /></svg>
                    </TaskIcon>
                    <TaskIcon $w={23}>
                        <svg width="17" height="17" viewBox="0 0 26 26"><circle cx="13" cy="13" r="12.5" fill="#e6cc1f" /><path d="M11 6h4v5h5v4h-5v5h-4v-5H6v-4h5z" fill="#3ba535" /></svg>
                    </TaskIcon>
                    <TaskIcon $w={24}>
                        <svg width="17" height="16" viewBox="0 0 17 16" fill="none" stroke="#fff"><path d="M1 1h11v10H1z" /><rect x="3" y="3" width="3" height="6" fill="#fff" /><circle cx="12" cy="11" r="4.5" fill="#127c3a" stroke="none" /></svg>
                    </TaskIcon>
                    <TaskIcon $w={23}>
                        <svg width="15" height="20" viewBox="0 0 15 20"><rect width="15" height="20" fill="#e1173f" /><path d="M4 5h7v8l-3-3H5zM3 14l2-3 2 2z" fill="#fff" /></svg>
                    </TaskIcon>
                    <TaskIcon $w={26}>
                        <svg width="16" height="16" viewBox="0 0 16 16" fill="none" stroke="#ccc"><path d="M1 15A14 14 0 0 1 15 1M4 15A11 11 0 0 1 15 4M7 15a8 8 0 0 1 8-8M10 15a5 5 0 0 1 5-5" /></svg>
                    </TaskIcon>
                    <TaskIcon $w={22}>
                        <svg width="17" height="16" viewBox="0 0 17 16" fill="none" stroke="#fff"><path d="M1 5h3l4-4v14l-4-4H1zM11 5c1 2 1 4 0 6M13 3c2 3 2 7 0 10" /></svg>
                    </TaskIcon>
                    <Clock>12:18 AM<br />10/5/2023</Clock>
                    <TaskIcon $w={46}>
                        <svg width="16" height="17" viewBox="0 0 16 17" fill="none" stroke="#fff"><path d="M.5.5h15v13h-5l-2.5 3-2.5-3h-5z" /></svg>
                    </TaskIcon>
                </Tray>
            </Taskbar>
        </Page>
    )
}
